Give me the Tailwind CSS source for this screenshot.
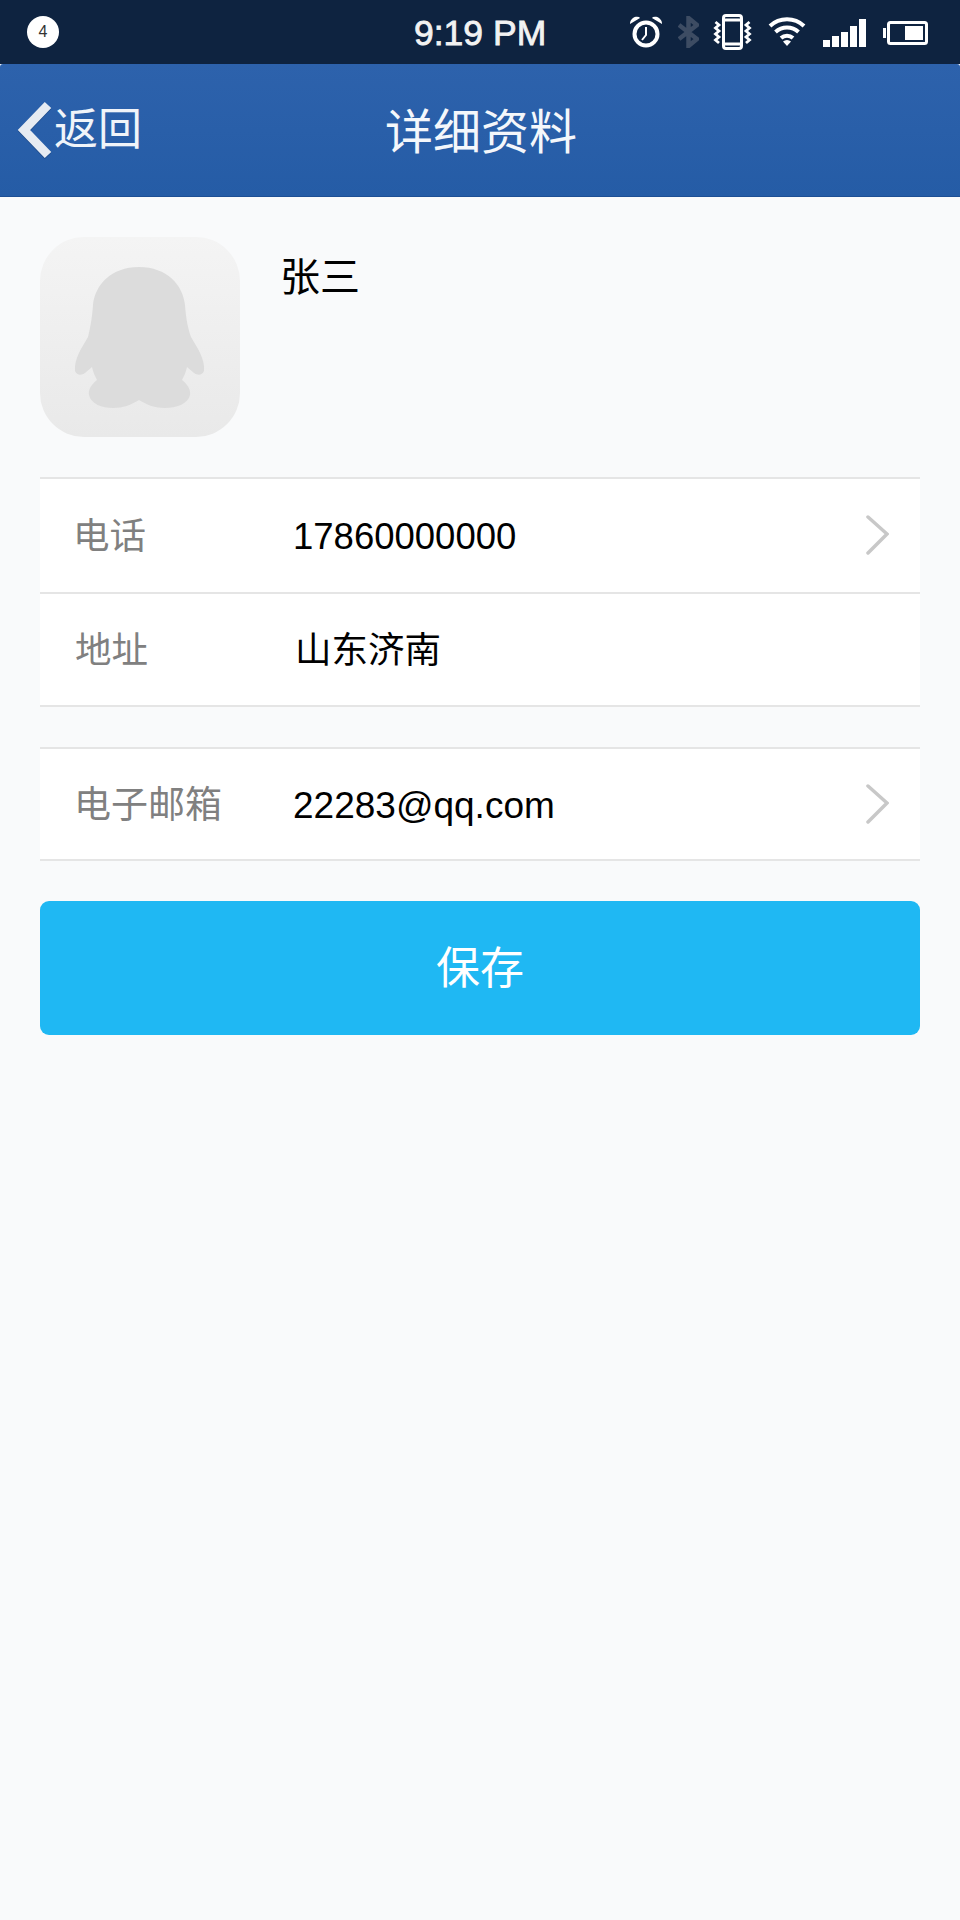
<!DOCTYPE html>
<html lang="zh-CN">
<head>
  <meta charset="UTF-8">
  <meta name="viewport" content="width=device-width, initial-scale=1.0">
  <title>详细资料</title>
  <script src="https://cdn.jsdelivr.net/npm/@tailwindcss/browser@4"></script>
</head>
<body class="bg-[#f9fafb] font-['Liberation_Sans','Noto_Sans_CJK_SC',sans-serif]">
  <div class="w-[960px] h-[1920px] flex flex-col">
    <!-- Status bar -->
    <div class="h-[64px] bg-[#0e2340] flex items-center justify-between pl-[27px] pr-[32px] relative">
      <div class="w-[32px] h-[32px] rounded-full bg-white flex items-center justify-center text-[16px] text-[#333] mb-[1px]">4</div>
      <span class="absolute left-[414px] top-[13px] text-[35.500px] leading-[40px] text-[#f2f2f2] [-webkit-text-stroke:0.8px_#f2f2f2]">9:19 PM</span>
      <div class="flex items-center">
        <!-- alarm -->
        <svg class="w-[32px] h-[32px]" viewBox="0 0 32 32" fill="none" stroke="#fff">
          <circle cx="16" cy="18" r="11.5" stroke-width="4"/>
          <path d="M16 11v8l-4 5" stroke-width="2"/>
          <path d="M0 8a7 7 0 0 1 9-7l1 1zM32 8a7 7 0 0 0-9-7l-1 1z" fill="#fff" stroke="none"/>
        </svg>
        <!-- bluetooth -->
        <svg class="w-[21px] h-[32px] ml-[16px]" viewBox="0 0 21 32" fill="none" stroke="#3d4c63" stroke-width="4.500">
          <path d="M1 9l18 14-8.500 7V2L19 9 1 23"/>
        </svg>
        <!-- vibrate -->
        <svg class="w-[39px] h-[36px] ml-[14px]" viewBox="0 0 39 36" fill="none" stroke="#fff">
          <rect x="10.500" y="1.500" width="18" height="33" rx="2.500" stroke-width="3"/>
          <path d="M10 6h19M10 30h19" stroke-width="3"/>
          <path d="M2.500 8l3.500 3-3.500 3 3.500 3-3.500 3 3.500 3-3.500 3 3.500 3M36.500 8L33 11l3.500 3-3.500 3 3.500 3-3.500 3 3.500 3-3.500 3" stroke-width="2.800"/>
        </svg>
        <!-- wifi -->
        <svg class="w-[38px] h-[30px] ml-[16px]" viewBox="0 0 38 30" fill="none" stroke="#fff" stroke-width="4">
          <path d="M2 9a25 25 0 0 1 34 0M7.500 15a17 17 0 0 1 23 0M13 21a9 9 0 0 1 12 0"/>
          <path d="M15 24.500a6 6 0 0 1 8 0L19 29z" fill="#fff" stroke="none"/>
        </svg>
        <!-- signal -->
        <div class="flex items-end gap-[2px] h-[28px] ml-[17px] mt-[1px]">
          <div class="w-[7px] h-[7px] bg-white"></div>
          <div class="w-[7px] h-[11px] bg-white"></div>
          <div class="w-[7px] h-[15px] bg-white"></div>
          <div class="w-[7px] h-[21px] bg-white"></div>
          <div class="w-[7px] h-[28px] bg-white"></div>
        </div>
        <!-- battery -->
        <svg class="w-[45px] h-[24px] ml-[17px] mt-[1px]" viewBox="0 0 45 24" fill="none">
          <path d="M0 7h3v10H0z" fill="#fff"/>
          <rect x="5.500" y="1.500" width="38" height="21" rx="2" stroke="#fff" stroke-width="3"/>
          <rect x="22" y="5" width="18" height="14" fill="#fff"/>
        </svg>
      </div>
    </div>

    <!-- Nav bar -->
    <header class="h-[133px] bg-gradient-to-b from-[#2d62ac] to-[#255ca6] border-b border-[#1d4f94] rounded-t-[3px] flex items-center relative">
      <div class="flex items-center pl-[17px]">
        <svg class="w-[36px] h-[58px]" viewBox="0 0 36 58" fill="none">
          <path d="M31 5L7 30l24 25" stroke="#1d4a8a" stroke-width="9"/>
          <path d="M31 4L7 29l24 25" stroke="#e6ebf2" stroke-width="9"/>
        </svg>
        <span class="text-[44px] leading-[56px] text-[#f0f4f9] ml-[1px]">返回</span>
      </div>
      <h1 class="absolute left-[385px] top-[40px] text-[48px] leading-[58px] text-[#f4f7fb] font-normal">详细资料</h1>
    </header>

    <main class="flex-1 px-[40px] pt-[40px]">
      <!-- Avatar and name -->
      <div class="flex items-start">
        <div class="w-[200px] h-[200px] rounded-[44px] bg-gradient-to-b from-[#f4f4f4] to-[#e9e9e9]">
          <svg class="w-[200px] h-[200px]" viewBox="0 0 200 200" fill="#dcdcdc">
            <path d="M99 30C127 30 143 48 145 68C146 82 148 92 151 100C158 112 165 122 164 134C162 139 157 138 154 136L147 130C146 135 144 139 142 143C147 147 151 152 150 158C148 167 136 171 125 171C115 171 107 168 99 163C91 168 83 171 73 171C62 171 51 167 49 158C48 152 52 147 57 143C55 139 53 135 52 130L45 136C42 138 37 139 35 134C34 122 41 112 48 100C50 92 52 82 53 68C55 48 71 30 99 30Z"/>
          </svg>
        </div>
        <span class="ml-[40px] mt-[16px] text-[40px] leading-[48px] text-black">张三</span>
      </div>

      <!-- Info rows -->
      <div class="mt-[40px] bg-white border-y-2 border-[#e5e5e5]">
        <div class="h-[115px] flex items-center border-b-2 border-[#e5e5e5]">
          <span class="w-[253px] pl-[33px] pt-[2px] text-[36.500px]/[44px] text-[#808080]">电话</span>
          <span class="pt-[2px] text-[36.500px]/[44px] text-black">17860000000</span>
          <svg class="w-[24px] h-[40px] ml-auto mr-[31px] -mt-[2px]" viewBox="0 0 24 40" fill="none">
            <path d="M3 2l19 17L3 38" stroke="#c8c8c8" stroke-width="3.500" stroke-linecap="round"/>
          </svg>
        </div>
        <div class="h-[111px] flex items-center">
          <span class="w-[255px] pl-[35px] pt-[2px] text-[36.500px]/[44px] text-[#808080]">地址</span>
          <span class="pt-[2px] text-[36.500px]/[44px] text-black">山东济南</span>
        </div>
      </div>

      <div class="mt-[40px] bg-white border-y-2 border-[#e5e5e5]">
        <div class="h-[110px] flex items-center">
          <span class="w-[253px] pl-[34px] pt-[4px] text-[37px]/[44px] text-[#808080]">电子邮箱</span>
          <span class="pt-[4px] text-[37px]/[44px] text-black">22283@qq.com</span>
          <svg class="w-[24px] h-[40px] ml-auto mr-[31px]" viewBox="0 0 24 40" fill="none">
            <path d="M3 2l19 17L3 38" stroke="#c8c8c8" stroke-width="3.500" stroke-linecap="round"/>
          </svg>
        </div>
      </div>

      <button class="mt-[40px] w-full h-[134px] pt-[2px] rounded-[9px] bg-[#1fb8f3] text-white text-[44px] flex items-center justify-center">保存</button>
    </main>
  </div>
</body>
</html>
